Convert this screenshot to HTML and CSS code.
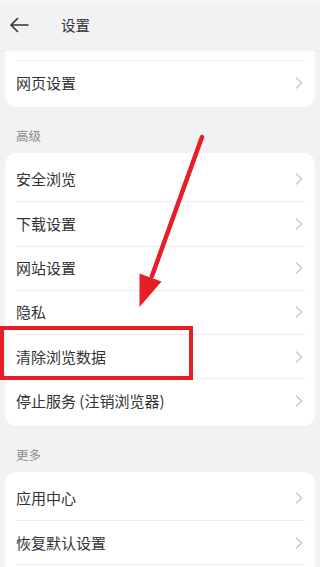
FILE: index.html
```html
<!DOCTYPE html>
<html lang="zh-CN">
<head>
<meta charset="utf-8">
<meta name="viewport" content="width=320">
<link rel="stylesheet" href="styles.css">
</head>
<body>
<div class="page">
  <header class="header">
    <div class="status"></div>
    <div class="bar">
      <svg class="back" width="20" height="16" viewBox="0 0 20 16"><path d="M19 8H2M8.5 1.5L2 8l6.5 6.5" fill="none" stroke="#333" stroke-width="1.6" stroke-linecap="round" stroke-linejoin="round"/></svg>
      <span class="title">设置</span>
    </div>
  </header>

  <section class="card card-first">
    <div class="stub"></div>
    <div class="row"><span>网页设置</span><svg class="chev" width="8" height="12" viewBox="0 0 8 12"><path d="M1.5 1l5 5-5 5" fill="none" stroke="#c6c6c6" stroke-width="1.4" stroke-linecap="round" stroke-linejoin="round"/></svg></div>
  </section>

  <div class="label">高级</div>
  <section class="card">
    <div class="row"><span>安全浏览</span><svg class="chev" width="8" height="12" viewBox="0 0 8 12"><path d="M1.5 1l5 5-5 5" fill="none" stroke="#c6c6c6" stroke-width="1.4" stroke-linecap="round" stroke-linejoin="round"/></svg></div>
    <div class="row"><span>下载设置</span><svg class="chev" width="8" height="12" viewBox="0 0 8 12"><path d="M1.5 1l5 5-5 5" fill="none" stroke="#c6c6c6" stroke-width="1.4" stroke-linecap="round" stroke-linejoin="round"/></svg></div>
    <div class="row"><span>网站设置</span><svg class="chev" width="8" height="12" viewBox="0 0 8 12"><path d="M1.5 1l5 5-5 5" fill="none" stroke="#c6c6c6" stroke-width="1.4" stroke-linecap="round" stroke-linejoin="round"/></svg></div>
    <div class="row"><span>隐私</span><svg class="chev" width="8" height="12" viewBox="0 0 8 12"><path d="M1.5 1l5 5-5 5" fill="none" stroke="#c6c6c6" stroke-width="1.4" stroke-linecap="round" stroke-linejoin="round"/></svg></div>
    <div class="row"><span>清除浏览数据</span><svg class="chev" width="8" height="12" viewBox="0 0 8 12"><path d="M1.5 1l5 5-5 5" fill="none" stroke="#c6c6c6" stroke-width="1.4" stroke-linecap="round" stroke-linejoin="round"/></svg></div>
    <div class="row"><span>停止服务 (注销浏览器)</span><svg class="chev" width="8" height="12" viewBox="0 0 8 12"><path d="M1.5 1l5 5-5 5" fill="none" stroke="#c6c6c6" stroke-width="1.4" stroke-linecap="round" stroke-linejoin="round"/></svg></div>
  </section>

  <div class="label">更多</div>
  <section class="card">
    <div class="row"><span>应用中心</span><svg class="chev" width="8" height="12" viewBox="0 0 8 12"><path d="M1.5 1l5 5-5 5" fill="none" stroke="#c6c6c6" stroke-width="1.4" stroke-linecap="round" stroke-linejoin="round"/></svg></div>
    <div class="row"><span>恢复默认设置</span><svg class="chev" width="8" height="12" viewBox="0 0 8 12"><path d="M1.5 1l5 5-5 5" fill="none" stroke="#c6c6c6" stroke-width="1.4" stroke-linecap="round" stroke-linejoin="round"/></svg></div>
    <div class="row row-empty"></div>
  </section>

  <div class="highlight"></div>
  <svg class="annot" width="320" height="567" viewBox="0 0 320 567">
    <line x1="202" y1="137" x2="152" y2="276" stroke="#e61f27" stroke-width="4.5" stroke-linecap="round"/>
    <polygon points="139.5,273.5 161.5,281.5 139.5,307" fill="#e61f27"/>
  </svg>
</div>
</body>
</html>
```

FILE: styles.css
```css
* { box-sizing: border-box; }
html, body { margin: 0; padding: 0; }
body {
  background: #f1f2f4;
  font-family: "Noto Sans CJK SC", "Noto Sans", sans-serif;
  color: #333;
  overflow: hidden;
}
.page {
  position: relative;
  width: 320px;
  height: 567px;
  overflow: hidden;
}
.header {
  position: relative;
  z-index: 2;
  height: 50px;
  background: #f1f2f4;
  box-shadow: 0 1px 2px rgba(0,0,0,0.06);
}
.status {
  height: 3px;
  background: #f7f7f8;
}
.bar {
  display: flex;
  align-items: center;
  height: 44px;
  padding-left: 9px;
}
.back { display: block; }
.title {
  margin-left: 32px;
  font-size: 14.5px;
  color: #333;
  line-height: 20px;
}
.card {
  background: #fff;
  margin: 0 5px;
  border-radius: 12px;
  padding: 4px 0 3.5px;
}
.card-first {
  border-radius: 0 0 12px 12px;
  padding-top: 0;
  padding-bottom: 2px;
}
.stub {
  height: 11px;
  border-bottom: 1px solid #efefef;
  margin: 0 10px 0 11px;
}
.row {
  display: flex;
  align-items: center;
  justify-content: space-between;
  height: 44.2px;
  margin: 0 10px 0 11px;
  padding-right: 2px;
  font-size: 15px;
  line-height: 20px;
  color: #333;
}
.row + .row { border-top: 1px solid #ececec; }
.chev { display: block; flex: none; }
.label {
  padding: 21px 16px 8px;
  height: 45px;
  font-size: 12.5px;
  line-height: 16px;
  color: #8a8a8a;
}
.label + .card { margin-top: 1px; }
.highlight {
  position: absolute;
  left: 0;
  top: 326px;
  width: 193px;
  height: 54px;
  border: 4.5px solid #e61f27;
  z-index: 3;
}
.annot {
  position: absolute;
  left: 0;
  top: 0;
  z-index: 4;
  pointer-events: none;
}
```
